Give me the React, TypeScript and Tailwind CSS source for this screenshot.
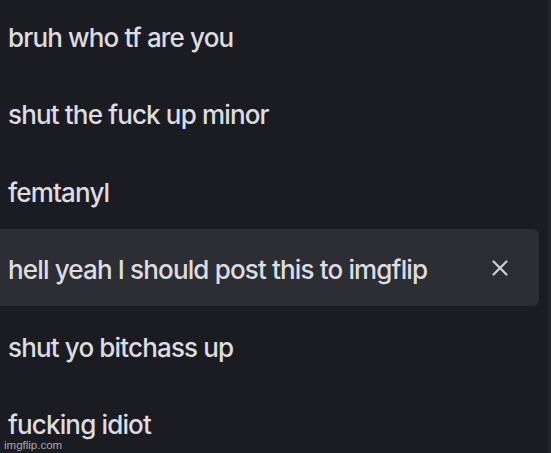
import React from "react";

const rows = [
  "bruh who tf are you",
  "shut the fuck up minor",
  "femtanyl",
  "hell yeah I should post this to imgflip",
  "shut yo bitchass up",
  "fucking idiot",
];

export default function App() {
  return (
    <div className="relative w-[551px] h-[453px] overflow-hidden bg-[#1b1c21] flex [font-variant-ligatures:none]" style={{ fontFamily: "Inter, 'Noto Sans', sans-serif" }}>
      <div className="flex-1 flex flex-col -mt-[4px] pr-[8px]">
        {rows.map((t, i) => (
          <div
            key={i}
            className={
              "h-[77.5px] shrink-0 flex items-center pl-[8px] pr-[30px] " +
              (i === 3 ? "bg-[#2d2e33] rounded-r-[6px]" : "")
            }
          >
            <span className="flex-1 text-[26px] font-medium leading-none tracking-[-0.85px] text-[#dcdde0] pt-[6px]">{t}</span>
            {i === 3 && (
              <svg width="18" height="18" viewBox="0 0 18 18" className="mt-[1px]">
                <path d="M2.5 2.5 L15.5 15.5 M15.5 2.5 L2.5 15.5" stroke="#cfd0d3" strokeWidth="2.2" strokeLinecap="round" />
              </svg>
            )}
          </div>
        ))}
      </div>
      <div className="w-[4px] bg-[#222328] shrink-0" />
      <div className="absolute left-[4px] bottom-[2px] text-[11.5px] leading-none text-[#a8a8aa]" style={{ fontFamily: "'Liberation Sans', Arial, sans-serif" }}>
        imgflip.com
      </div>
    </div>
  );
}
